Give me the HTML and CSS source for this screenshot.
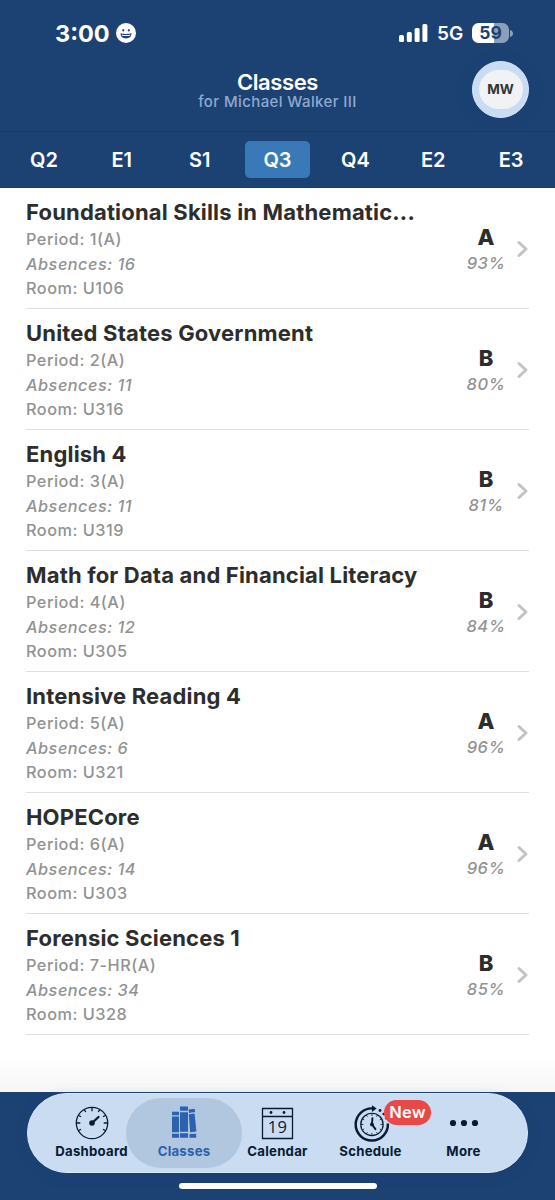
FILE: index.html
```html
<!DOCTYPE html>
<html lang="en">
<head>
<meta charset="utf-8">
<meta name="viewport" content="width=device-width">
<title>Classes</title>
<link rel="stylesheet" href="styles.css">
</head>
<body>
<div class="app">
  <header class="header">
    <div class="status">
      <div class="time">3:00
        <svg class="smile" viewBox="0 0 20 20"><circle cx="10" cy="10" r="10" fill="#fff"/><ellipse cx="7.2" cy="7.2" rx=".9" ry="1.300"/><ellipse cx="12.8" cy="7.2" rx=".9" ry="1.300"/><path d="M4.4 10.200q5.600 1.500 11.200 0q-.5 5.200-5.600 5.200t-5.600-5.200z"/><path d="M5.600 11.500q4.400 1 8.800 0l-.6 1.200q-3.800.8-7.600 0z" fill="#fff"/></svg>
      </div>
      <div class="signals">
        <svg class="bars" viewBox="0 0 29 18"><rect x="0" y="11" width="5" height="7" rx="1.500"/><rect x="7.800" y="8" width="5" height="10" rx="1.500"/><rect x="15.600" y="4" width="5" height="14" rx="1.500"/><rect x="23.400" y="0" width="5" height="18" rx="1.500"/></svg>
        <span class="network">5G</span>
        <span class="battery"><span class="level"><span>5</span><span>9</span></span><svg class="cap" viewBox="0 0 3 7"><path d="M0 0q3 1 3 3.500t-3 3.500z"/></svg></span>
      </div>
    </div>
    <div class="titlebar">
      <div class="titles"><h1>Classes</h1><p>for Michael Walker III</p></div>
      <div class="avatar"><span>MW</span></div>
    </div>
  </header>
  <nav class="terms"><span>Q2</span><span>E1</span><span>S1</span><span class="active">Q3</span><span>Q4</span><span>E2</span><span>E3</span></nav>
  <main class="list">
    <article class="row"><div class="info"><h2>Foundational Skills in Mathematic...</h2><p>Period: 1(A)</p><p class="abs">Absences: 16</p><p>Room: U106</p></div><div class="grade"><b>A</b><i>93%</i></div><svg class="chevron" viewBox="0 0 12 18"><path d="M2 2.500l7 6.500-7 6.500"/></svg></article>
    <article class="row"><div class="info"><h2>United States Government</h2><p>Period: 2(A)</p><p class="abs">Absences: 11</p><p>Room: U316</p></div><div class="grade"><b>B</b><i>80%</i></div><svg class="chevron" viewBox="0 0 12 18"><path d="M2 2.500l7 6.500-7 6.500"/></svg></article>
    <article class="row"><div class="info"><h2>English 4</h2><p>Period: 3(A)</p><p class="abs">Absences: 11</p><p>Room: U319</p></div><div class="grade"><b>B</b><i>81%</i></div><svg class="chevron" viewBox="0 0 12 18"><path d="M2 2.500l7 6.500-7 6.500"/></svg></article>
    <article class="row"><div class="info"><h2>Math for Data and Financial Literacy</h2><p>Period: 4(A)</p><p class="abs">Absences: 12</p><p>Room: U305</p></div><div class="grade"><b>B</b><i>84%</i></div><svg class="chevron" viewBox="0 0 12 18"><path d="M2 2.500l7 6.500-7 6.500"/></svg></article>
    <article class="row"><div class="info"><h2>Intensive Reading 4</h2><p>Period: 5(A)</p><p class="abs">Absences: 6</p><p>Room: U321</p></div><div class="grade"><b>A</b><i>96%</i></div><svg class="chevron" viewBox="0 0 12 18"><path d="M2 2.500l7 6.500-7 6.500"/></svg></article>
    <article class="row"><div class="info"><h2>HOPECore</h2><p>Period: 6(A)</p><p class="abs">Absences: 14</p><p>Room: U303</p></div><div class="grade"><b>A</b><i>96%</i></div><svg class="chevron" viewBox="0 0 12 18"><path d="M2 2.500l7 6.500-7 6.500"/></svg></article>
    <article class="row"><div class="info"><h2>Forensic Sciences 1</h2><p>Period: 7-HR(A)</p><p class="abs">Absences: 34</p><p>Room: U328</p></div><div class="grade"><b>B</b><i>85%</i></div><svg class="chevron" viewBox="0 0 12 18"><path d="M2 2.500l7 6.500-7 6.500"/></svg></article>
  </main>
  <footer class="footer">
    <nav class="tabs">
      <a class="tab">
        <svg viewBox="0 0 36 36"><g fill="none" stroke="#071b33" stroke-width="1.300"><circle cx="19" cy="18" r="15.700"/><path d="M19 2.300v4M3.300 18h4M30.700 18h4M11.200 4.400l1.500 2.600M26.800 4.400l-1.500 2.600M5.400 10.200l2.600 1.500M32.600 10.200l-2.600 1.500M5.400 25.800l2.600-1.500M32.600 25.800l-2.600-1.500" /></g><circle cx="19" cy="18" r="2.800" fill="#071b33"/><path d="M19 18l6.500-6" stroke="#071b33" stroke-width="2.300" stroke-linecap="round"/></svg>
        <span>Dashboard</span>
      </a>
      <a class="tab selected">
        <svg viewBox="0 0 36 36" fill="#2c61ad"><path d="M6 6.800h7v3.400H6zM6 11.500h7v15.800H6zM6 28.800h7v4H6zM14 1.500h8v4.300h-8zM14 7.200h8v19.500h-8zM14 28.300h8v4.500h-8zM22.600 4.500l6-.8.5 3.400-6 .8zM22.800 9.200l5.800-.7 1.800 18-6.300.8zM23.500 29l6.700-.3v4.100h-6.700z"/></svg>
        <span>Classes</span>
      </a>
      <a class="tab">
        <svg viewBox="0 0 36 36"><path d="M2.500 3.500h30v30h-30zM2.500 11.500h30" fill="none" stroke="#071b33" stroke-width="1.300"/><circle cx="11" cy="7.500" r="1.400" fill="#071b33"/><circle cx="24" cy="7.500" r="1.400" fill="#071b33"/><text x="17.500" y="28" text-anchor="middle" class="day">19</text></svg>
        <span>Calendar</span>
      </a>
      <a class="tab">
        <svg viewBox="0 0 38 36"><g fill="none" stroke="#071b33"><path d="M21 2.600A17 17 0 1 0 36.800 18.500" stroke-width="2.600"/><circle cx="20" cy="19.500" r="11.800" stroke-width="1.300"/><path d="M20 8v2.500M20 28.500v2.500M8.500 19.500h2.500M29 19.500h2.500M14.200 9.500l1 1.700M25.800 9.500l-1 1.700M10 13.700l1.700 1M30 13.700l-1.700 1M10 25.300l1.700-1M30 25.300l-1.700-1M14.200 29.500l1-1.700M25.800 29.500l-1-1.700" stroke-width=".9"/><path d="M20.500 13l-.5 6.500 3.700 5" stroke-width="2" stroke-linecap="round"/></g><circle cx="20" cy="19.500" r="2" fill="#071b33"/><path d="M20-.8l5 3.500-5 3.800z" fill="#071b33"/><g fill="#071b33"><circle cx="28.500" cy="4.800" r="1.500"/><circle cx="32.500" cy="8.500" r="1.400"/><circle cx="35.300" cy="13" r="1.400"/></g></svg>
        <span>Schedule</span><em>New</em>
      </a>
      <a class="tab">
        <svg viewBox="0 0 36 36" fill="#071b33"><circle cx="7" cy="18" r="3.100"/><circle cx="18" cy="18" r="3.100"/><circle cx="29" cy="18" r="3.100"/></svg>
        <span>More</span>
      </a>
    </nav>
    <div class="home"></div>
  </footer>
</div>
</body>
</html>
```
FILE: styles.css
```css
* { box-sizing: border-box; }
body { margin: 0; font-family: Inter, sans-serif; background: #fff; }
h1, h2, p { margin: 0; }
svg { display: block; flex: none; overflow: visible; }
.app { width: 555px; height: 1200px; display: flex; flex-direction: column; overflow: hidden; }
.header { height: 132px; background: #1c4274; color: #fff; border-bottom: 1px solid #193b69; }
.status { display: flex; justify-content: space-between; height: 60px; padding: 23px 42px 0 55px; }
.time { display: flex; align-items: center; gap: 6px; height: 20px; font-size: 23.500px; font-weight: 700; }
.smile { width: 20px; height: 20px; fill: #1c4274; }
.signals { display: flex; align-items: center; height: 20px; }
.bars { width: 29px; height: 18px; fill: #fff; }
.network { margin-left: 9px; width: 35px; font-size: 19px; font-weight: 600; line-height: 20px; padding-top: 1px; }
.battery { display: flex; align-items: center; gap: 1px; }
.level { display: flex; justify-content: center; width: 37px; height: 20px; border-radius: 6.500px; background: linear-gradient(90deg, #fff 59%, #8b9fb9 59%); color: #1c4274; font-size: 17.500px; line-height: 20px; font-weight: 700; }
.cap { width: 3px; height: 7px; fill: #8b9fb9; }
.titlebar { display: grid; grid-template-columns: 1fr auto 1fr; padding: 0 26px; }
.titles { grid-column: 2; padding-top: 10px; text-align: center; }
h1 { font-size: 22px; line-height: 24px; font-weight: 600; letter-spacing: -.4px; }
.titles p { color: #8fa9cd; font-size: 15px; line-height: 15px; font-weight: 500; letter-spacing: .4px; }
.avatar { justify-self: end; display: grid; place-items: center; width: 57px; height: 57px; margin-top: 1px; border-radius: 50%; background: #c9dcf3; border: 1px solid #d5e9ff; box-shadow: 0 3px 18px #16386522; }
.avatar span { width: 44px; height: 39px; border-radius: 20px; background: #f1f2f4; color: #323436; font-size: 13.500px; line-height: 39px; text-align: center; font-weight: 700; }
.terms { display: grid; grid-template-columns: repeat(7, 1fr); align-items: center; height: 56px; padding: 0 5px 1px; background: #1c4274; color: #fff; font-size: 20px; font-weight: 600; text-align: center; border-bottom: 1px solid #193b69; }
.terms span { margin: 0 6px; height: 37px; line-height: 38px; border-radius: 5px; }
.terms .active { background: #3a79b7; }
.list { flex: 1; padding: 0 26px; background: linear-gradient(#fff calc(100% - 35px), #f7f6f7); }
.row { display: flex; height: 121px; border-bottom: 1px solid #dfdfdf; }
.info { flex: 1; padding-top: 11px; white-space: nowrap; }
h2 { font-size: 22px; line-height: 26px; font-weight: 700; color: #2d2d2d; letter-spacing: .18px; margin-bottom: 2px; }
.info p { color: #929292; font-size: 16.300px; line-height: 24px; font-weight: 500; letter-spacing: .5px; }
.info h2 + p { line-height: 25px; }
.grade { width: 60px; padding-top: 37px; text-align: center; margin-right: -4px; }
.grade b { display: block; color: #2d2d2d; font-size: 22px; line-height: 25px; font-weight: 800; }
.grade i { display: block; color: #929292; font-size: 16.500px; line-height: 27px; font-weight: 500; letter-spacing: .5px; }
.info .abs { font-style: italic; }
.chevron { width: 12px; height: 18px; margin: 51.500px 0 0 5px; fill: none; stroke: #c3c3c3; stroke-width: 3; stroke-linecap: round; stroke-linejoin: round; }
.footer { height: 108px; padding: 1px 27px 0; background: #1c4274; }
.tabs { display: grid; grid-template-columns: repeat(5, 1fr); height: 80px; padding: 4px 17px; border-radius: 40px; border: 1px solid #d8eaff; background: #cadcf1; box-shadow: 0 3px 14px #16386533; }
.tab { position: relative; display: flex; flex-direction: column; align-items: center; height: 70px; padding-top: 7px; color: #071b33; font-size: 13.200px; line-height: 16px; font-weight: 700; letter-spacing: .25px; }
.tab svg { width: 36px; height: 36px; margin-bottom: 2px; }
.tab:first-child svg { margin-left: -2px; }
.selected { margin: 0 -11px 0 -12px; border-radius: 35px; background: #b1c6df; color: #2c61ad; }
.day { font: 400 16.500px "Open Sans", sans-serif; fill: #071b33; }
.tab em { position: absolute; left: 60px; top: 2px; width: 47px; height: 25px; border-radius: 13px; background: #e84846; color: #fff; font-size: 16.500px; line-height: 25px; text-align: center; font-style: normal; font-weight: 600; }
.home { width: 198px; height: 6px; margin: 10px auto 0; border-radius: 3px; background: #fff; }
```
